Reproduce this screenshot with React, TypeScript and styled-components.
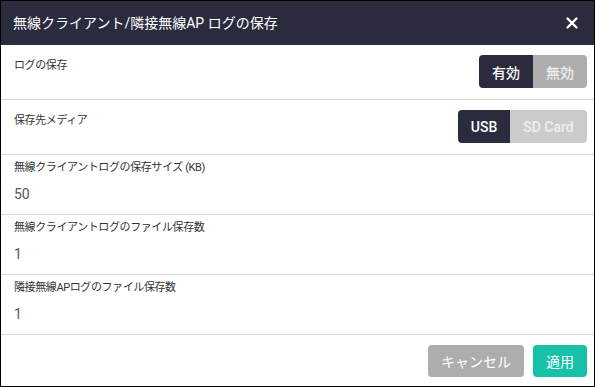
import React, { ReactElement, useState } from 'react'
import styled, { createGlobalStyle } from 'styled-components'

const GlobalStyle = createGlobalStyle`
  html, body {
    margin: 0;
    padding: 0;
    background: #ffffff;
  }
  body {
    font-family: Roboto, "Noto Sans CJK JP", sans-serif;
  }
`

const palette = {
  navy: '#2a2b3d',
  divider: '#d6d6d6',
  label: '#333333',
  value: '#555555',
  grey: '#adadad',
  lightGrey: '#cbcbcb',
  teal: '#16c1a8',
}

const Dialog = styled.div`
  box-sizing: border-box;
  width: 595px;
  height: 387px;
  border: 1px solid #000;
  display: flex;
  flex-direction: column;
  background: #fff;
`

const Header = styled.div`
  display: flex;
  align-items: center;
  justify-content: space-between;
  height: 44px;
  padding: 0 14px 0 12px;
  background: ${palette.navy};
  color: #fff;
`

const Title = styled.h1`
  margin: 0;
  font-size: 14px;
  font-weight: 400;
  font-family: Roboto, "Noto Sans CJK JP", sans-serif;
  line-height: 20px;
`

const CloseButton = styled.button`
  display: flex;
  align-items: center;
  justify-content: center;
  width: 16px;
  height: 16px;
  padding: 0;
  border: none;
  background: transparent;
  cursor: pointer;
`

const Row = styled.div`
  display: flex;
  justify-content: space-between;
  align-items: flex-start;
  padding: 10px 7px 11px 13px;
  border-bottom: 1px solid ${palette.divider};
`

const FieldRow = styled.div`
  display: flex;
  flex-direction: column;
  gap: 8px;
  height: 44px;
  padding: 5px 13px 10px;
  border-bottom: 1px solid ${palette.divider};
`

const Label = styled.div<{ $top?: number }>`
  margin-top: ${(p) => p.$top ?? 0}px;
  font-size: 11px;
  line-height: 16px;
  letter-spacing: -0.4px;
  color: ${palette.label};
`

const Value = styled.div`
  font-size: 14px;
  line-height: 20px;
  color: ${palette.value};
`

const Toggle = styled.div`
  display: flex;
  height: 33px;
  border-radius: 4px;
  overflow: hidden;
`

const ToggleOption = styled.button<{ $active: boolean; $off: string; $width: number }>`
  width: ${(p) => p.$width}px;
  height: 100%;
  padding: 0;
  border: none;
  font-family: Roboto, "Noto Sans CJK JP", sans-serif;
  font-size: 14px;
  font-weight: 500;
  color: ${(p) => (p.$active ? '#fff' : '#efefef')};
  background: ${(p) => (p.$active ? palette.navy : p.$off)};
  cursor: pointer;
`

const Footer = styled.div`
  display: flex;
  justify-content: flex-end;
  gap: 9px;
  padding: 10px 7px 0 0;
`

const ActionButton = styled.button<{ $color: string; $width: number }>`
  width: ${(p) => p.$width}px;
  height: 32px;
  border: none;
  border-radius: 4px;
  background: ${(p) => p.$color};
  color: #fff;
  font-family: Roboto, "Noto Sans CJK JP", sans-serif;
  font-size: 14px;
  cursor: pointer;
`

const CloseIcon = (): ReactElement => (
  <svg width="12" height="12" viewBox="0 0 12 12">
    <path d="M1.5 1.5 L10.5 10.5 M10.5 1.5 L1.5 10.5" stroke="#fff" strokeWidth="2.4" strokeLinecap="round" />
  </svg>
)

const fields = [
  { label: '無線クライアントログの保存サイズ (KB)', value: '50' },
  { label: '無線クライアントログのファイル保存数', value: '1' },
  { label: '隣接無線APログのファイル保存数', value: '1' },
]

export default function App(): ReactElement {
  const [logOn, setLogOn] = useState(true)
  const [media, setMedia] = useState<'usb' | 'sd'>('usb')

  return (
    <>
      <GlobalStyle />
      <Dialog>
        <Header>
          <Title>無線クライアント/隣接無線AP ログの保存</Title>
          <CloseButton aria-label="close">
            <CloseIcon />
          </CloseButton>
        </Header>

        <Row>
          <Label $top={3}>ログの保存</Label>
          <Toggle>
            <ToggleOption $active={logOn} $off={palette.grey} $width={54} onClick={() => setLogOn(true)}>
              有効
            </ToggleOption>
            <ToggleOption $active={!logOn} $off={palette.grey} $width={54} onClick={() => setLogOn(false)}>
              無効
            </ToggleOption>
          </Toggle>
        </Row>

        <Row>
          <Label $top={3}>保存先メディア</Label>
          <Toggle>
            <ToggleOption $active={media === 'usb'} $off={palette.lightGrey} $width={52} onClick={() => setMedia('usb')}>
              USB
            </ToggleOption>
            <ToggleOption $active={media === 'sd'} $off={palette.lightGrey} $width={77} onClick={() => setMedia('sd')}>
              SD Card
            </ToggleOption>
          </Toggle>
        </Row>

        {fields.map((f) => (
          <FieldRow key={f.label}>
            <Label>{f.label}</Label>
            <Value>{f.value}</Value>
          </FieldRow>
        ))}

        <Footer>
          <ActionButton $color={palette.grey} $width={96}>キャンセル</ActionButton>
          <ActionButton $color={palette.teal} $width={54}>適用</ActionButton>
        </Footer>
      </Dialog>
    </>
  )
}
